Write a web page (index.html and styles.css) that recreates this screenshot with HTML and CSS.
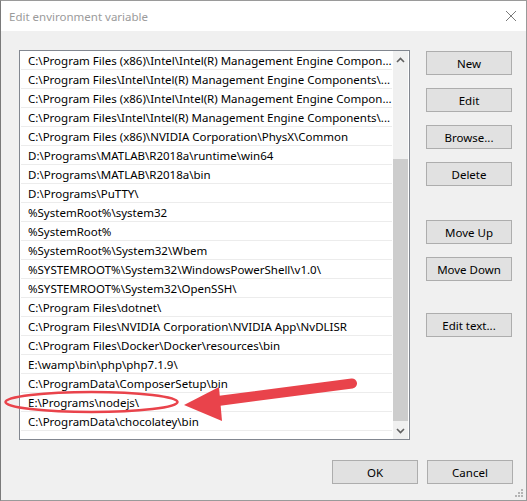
FILE: index.html
```html
<!DOCTYPE html>
<html>
<head>
<meta name="viewport" content="width=device-width, initial-scale=1">
<link rel="stylesheet" href="styles.css">
</head>
<body>
    <div class="window">
        <div class="titleBar">
            <span class="title">Edit environment variable</span>
            <svg class="closeIcon" width="12" height="12" viewBox="0 0 12 12">
                <path d="M1 1 L11 11 M11 1 L1 11" stroke="#7a7a7a" stroke-width="1" fill="none"/>
            </svg>
        </div>
        <div class="content">
            <div class="mainRow">
                <div class="listBox">
                    <div class="listRows">
                        <div class="row">C:\Program Files (x86)\Intel\Intel(R) Management Engine Compon...</div>
                        <div class="row">C:\Program Files\Intel\Intel(R) Management Engine Components\...</div>
                        <div class="row">C:\Program Files (x86)\Intel\Intel(R) Management Engine Compon...</div>
                        <div class="row">C:\Program Files\Intel\Intel(R) Management Engine Components\...</div>
                        <div class="row">C:\Program Files (x86)\NVIDIA Corporation\PhysX\Common</div>
                        <div class="row">D:\Programs\MATLAB\R2018a\runtime\win64</div>
                        <div class="row">D:\Programs\MATLAB\R2018a\bin</div>
                        <div class="row">D:\Programs\PuTTY\</div>
                        <div class="row">%SystemRoot%\system32</div>
                        <div class="row">%SystemRoot%</div>
                        <div class="row">%SystemRoot%\System32\Wbem</div>
                        <div class="row">%SYSTEMROOT%\System32\WindowsPowerShell\v1.0\</div>
                        <div class="row">%SYSTEMROOT%\System32\OpenSSH\</div>
                        <div class="row">C:\Program Files\dotnet\</div>
                        <div class="row">C:\Program Files\NVIDIA Corporation\NVIDIA App\NvDLISR</div>
                        <div class="row">C:\Program Files\Docker\Docker\resources\bin</div>
                        <div class="row">E:\wamp\bin\php\php7.1.9\</div>
                        <div class="row">C:\ProgramData\ComposerSetup\bin</div>
                        <div class="row">E:\Programs\nodejs\</div>
                        <div class="row">C:\ProgramData\chocolatey\bin</div>
                    </div>
                    <div class="scrollBar">
                        <div class="scrollArrow">
                            <svg width="9" height="6" viewBox="0 0 9 6"><path d="M1 5 L4.5 1.5 L8 5" stroke="#606060" stroke-width="1.6" fill="none"/></svg>
                        </div>
                        <div class="scrollTrack">
                            <div class="scrollThumb"></div>
                        </div>
                        <div class="scrollArrow">
                            <svg width="9" height="6" viewBox="0 0 9 6"><path d="M1 1 L4.5 4.5 L8 1" stroke="#606060" stroke-width="1.6" fill="none"/></svg>
                        </div>
                    </div>
                </div>
                <div class="sideButtons">
                    <a href="#" class="button">New</a>
                    <a href="#" class="button">Edit</a>
                    <a href="#" class="button">Browse...</a>
                    <a href="#" class="button">Delete</a>
                    <a href="#" class="button groupStart">Move Up</a>
                    <a href="#" class="button">Move Down</a>
                    <a href="#" class="button textStart">Edit text...</a>
                </div>
            </div>
            <div class="bottomButtons">
                <a href="#" class="button">OK</a>
                <a href="#" class="button">Cancel</a>
            </div>
        </div>

        <!-- red marker drawn over the list -->
        <svg class="annotation" width="527" height="501" viewBox="0 0 527 501">
            <ellipse cx="91.5" cy="402" rx="86" ry="10" stroke="#e9434b" stroke-width="2.5" fill="none"/>
            <path d="M214 401.5 L352 383.5" stroke="#e9434b" stroke-width="10" stroke-linecap="round"/>
            <polygon points="184,405 219,387 222,421" fill="#e9434b"/>
        </svg>

        <svg class="grip" width="8" height="8" viewBox="0 0 8 8">
            <rect x="6" y="0" width="2" height="2" fill="#b4b4b4"/>
            <rect x="3" y="3" width="2" height="2" fill="#b4b4b4"/>
            <rect x="6" y="3" width="2" height="2" fill="#b4b4b4"/>
            <rect x="0" y="6" width="2" height="2" fill="#b4b4b4"/>
            <rect x="3" y="6" width="2" height="2" fill="#b4b4b4"/>
            <rect x="6" y="6" width="2" height="2" fill="#b4b4b4"/>
        </svg>
    </div>
</body>
</html>
```

FILE: styles.css
```css
html, body {
    margin: 0px;
    padding: 0px;
    background: #f0f0f0;
}

.window {
    position: relative;
    width: 527px;
    height: 501px;
    box-sizing: border-box;
    border: 1px solid #9a9a9a;
    border-left-color: #7a7a7a;
    background: #f0f0f0;
    font-family: "Noto Sans", "Open Sans", sans-serif;
    font-size: 11.5px;
    color: #000000;
}

.titleBar {
    height: 30px;
    background: #ffffff;
    display: flex;
    align-items: center;
    justify-content: space-between;
    padding: 0px 9px 0px 8px;
}

.title {
    color: #9b9b9b;
    font-size: 11.5px;
    margin-top: 1px;
}

.closeIcon {
    margin-top: -1px;
}

.content {
    padding: 19px 13px 0px 18px;
}

.mainRow {
    display: flex;
    gap: 16px;
}

.listBox {
    width: 391px;
    height: 390px;
    box-sizing: border-box;
    border: 1px solid #828790;
    background: #ffffff;
    display: flex;
}

.listRows {
    flex: 1;
    overflow: hidden;
}

.row {
    height: 17px;
    padding-top: 1px;
    line-height: 18px;
    border-bottom: 1px solid #ececec;
    margin-left: 1px;
    padding-left: 7px;
    white-space: nowrap;
    overflow: hidden;
}

.scrollBar {
    width: 15px;
    margin: 0px 1px 0px 1px;
    background: #f0f0f0;
    display: flex;
    flex-direction: column;
}

.scrollArrow {
    height: 17px;
    display: flex;
    align-items: center;
    justify-content: center;
}

.scrollTrack {
    flex: 1;
    padding-top: 91px;
}

.scrollThumb {
    height: 262px;
    background: #cdcdcd;
}

.sideButtons {
    display: flex;
    flex-direction: column;
    gap: 13px;
    padding-top: 1px;
}

.button {
    display: flex;
    align-items: center;
    justify-content: center;
    width: 86px;
    height: 24px;
    box-sizing: border-box;
    background: #e1e1e1;
    border: 1px solid #adadad;
    color: #000000;
    text-decoration: none;
}

.groupStart {
    margin-top: 21px;
}

.textStart {
    margin-top: 19px;
}

.bottomButtons {
    display: flex;
    justify-content: flex-end;
    gap: 9px;
    margin-top: 20px;
}

.annotation {
    position: absolute;
    left: -1px;
    top: -1px;
    pointer-events: none;
}

.grip {
    position: absolute;
    right: 3px;
    bottom: 3px;
}
```
